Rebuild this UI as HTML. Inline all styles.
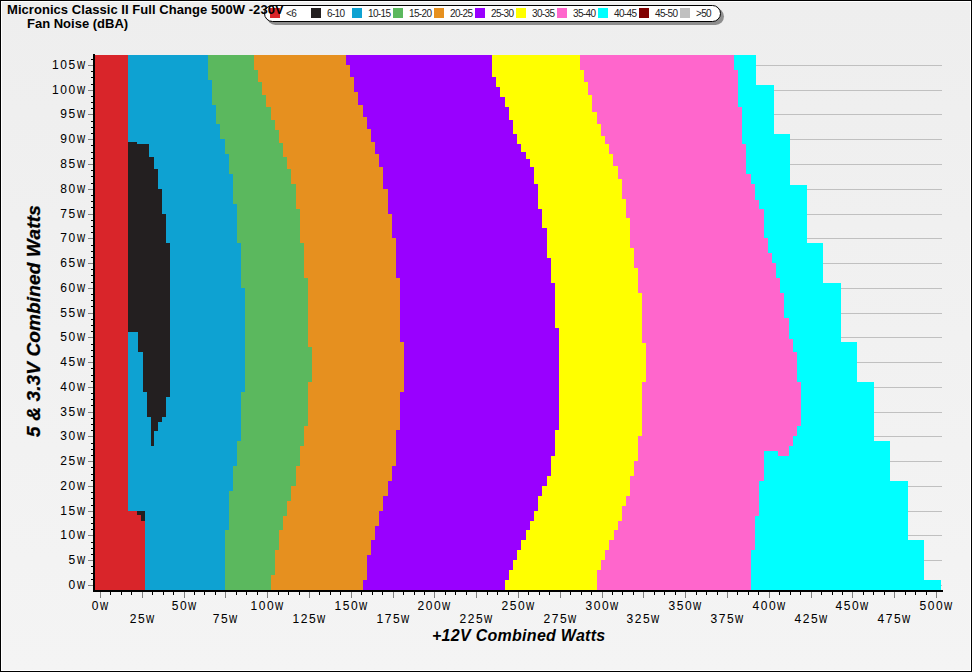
<!DOCTYPE html><html><head><meta charset="utf-8"><style>
html,body{margin:0;padding:0}
body{width:972px;height:672px;position:relative;overflow:hidden;font-family:"Liberation Sans",sans-serif;
background:linear-gradient(to bottom,#eeeeee 0%,#f1f1f1 50%,#f4f4f4 100%)}
.frame{position:absolute;left:0;top:0;width:970px;height:670px;border:1px solid #000}
.frame2{position:absolute;left:1px;top:1px;width:968px;height:668px;border:1px solid #fff}
.t{position:absolute;white-space:nowrap;line-height:1}
.yl{position:absolute;right:887px;font-size:12px;letter-spacing:1.6px;white-space:nowrap;color:#000;line-height:12px;-webkit-text-stroke:0.05px #000}
.w{display:inline-block;font-size:14.5px;transform:scaleX(0.78);transform-origin:0 0;margin-right:-2.3px;letter-spacing:0}
.xl{position:absolute;font-size:12px;letter-spacing:1.6px;white-space:nowrap;color:#000;line-height:12px;text-align:center;width:60px;-webkit-text-stroke:0.05px #000}
.leg{position:absolute;left:264px;top:5px;width:455px;height:15px;border:1px solid #000;border-radius:9px;background:#fff}
.legsh{position:absolute;left:267px;top:8px;width:457px;height:17px;border-radius:9px;background:#8e8e8e}
.sq{position:absolute;top:8px;width:10px;height:10px}
.lt{position:absolute;top:9px;font-size:10px;letter-spacing:-0.65px;line-height:9px;white-space:nowrap;color:#222}

</style></head><body>
<div class="frame"></div><div class="frame2"></div>
<svg width="972" height="672" style="position:absolute;left:0;top:0" shape-rendering="crispEdges"><rect x="95" y="65" width="847" height="1" fill="#c0c0c0"/><rect x="95" y="90" width="847" height="1" fill="#c0c0c0"/><rect x="95" y="114" width="847" height="1" fill="#c0c0c0"/><rect x="95" y="139" width="847" height="1" fill="#c0c0c0"/><rect x="95" y="164" width="847" height="1" fill="#c0c0c0"/><rect x="95" y="189" width="847" height="1" fill="#c0c0c0"/><rect x="95" y="214" width="847" height="1" fill="#c0c0c0"/><rect x="95" y="238" width="847" height="1" fill="#c0c0c0"/><rect x="95" y="263" width="847" height="1" fill="#c0c0c0"/><rect x="95" y="288" width="847" height="1" fill="#c0c0c0"/><rect x="95" y="313" width="847" height="1" fill="#c0c0c0"/><rect x="95" y="337" width="847" height="1" fill="#c0c0c0"/><rect x="95" y="362" width="847" height="1" fill="#c0c0c0"/><rect x="95" y="387" width="847" height="1" fill="#c0c0c0"/><rect x="95" y="412" width="847" height="1" fill="#c0c0c0"/><rect x="95" y="436" width="847" height="1" fill="#c0c0c0"/><rect x="95" y="461" width="847" height="1" fill="#c0c0c0"/><rect x="95" y="486" width="847" height="1" fill="#c0c0c0"/><rect x="95" y="511" width="847" height="1" fill="#c0c0c0"/><rect x="95" y="535" width="847" height="1" fill="#c0c0c0"/><rect x="95" y="560" width="847" height="1" fill="#c0c0c0"/><rect x="95" y="585" width="847" height="1" fill="#c0c0c0"/><path d="M95 55 L756 55 L756 85 L774 85 L774 134 L790 134 L790 185 L807 185 L807 243 L823 243 L823 283 L841 283 L841 342 L857 342 L857 382 L874 382 L874 441 L890 441 L890 481 L908 481 L908 540 L924 540 L924 580 L941 580 L941 590 L95 590 Z" fill="#00ffff"/><path d="M95 55 L734 55 L734 70 L738 70 L738 107 L742 107 L742 144 L746 144 L746 174 L751 174 L751 184 L755 184 L755 200 L759 200 L759 209 L764 209 L764 238 L768 238 L768 253 L772 253 L772 263 L776 263 L776 278 L780 278 L780 293 L784 293 L784 318 L789 318 L789 339 L793 339 L793 352 L797 352 L797 382 L801 382 L801 426 L797 426 L797 436 L793 436 L793 446 L789 446 L789 456 L764 456 L764 481 L759 481 L759 516 L755 516 L755 550 L751 550 L751 590 L95 590 Z" fill="#ff66cc"/><path d="M95 55 L580 55 L580 70 L584 70 L584 82 L588 82 L588 95 L592 95 L592 112 L597 112 L597 124 L601 124 L601 136 L605 136 L605 144 L609 144 L609 154 L613 154 L613 166 L618 166 L618 179 L622 179 L622 199 L626 199 L626 218 L630 218 L630 248 L634 248 L634 268 L638 268 L638 293 L642 293 L642 343 L646 343 L646 382 L642 382 L642 436 L638 436 L638 461 L634 461 L634 476 L630 476 L630 496 L626 496 L626 506 L622 506 L622 521 L618 521 L618 530 L614 530 L614 540 L609 540 L609 550 L605 550 L605 560 L601 560 L601 570 L597 570 L597 590 L95 590 Z" fill="#ffff00"/><path d="M95 55 L492 55 L492 77 L496 77 L496 87 L500 87 L500 97 L505 97 L505 107 L509 107 L509 120 L513 120 L513 134 L517 134 L517 144 L521 144 L521 152 L526 152 L526 159 L530 159 L530 167 L534 167 L534 184 L538 184 L538 209 L542 209 L542 228 L547 228 L547 258 L551 258 L551 283 L555 283 L555 328 L559 328 L559 430 L555 430 L555 456 L551 456 L551 476 L547 476 L547 486 L542 486 L542 496 L538 496 L538 511 L534 511 L534 521 L530 521 L530 530 L526 530 L526 540 L521 540 L521 550 L517 550 L517 560 L513 560 L513 570 L509 570 L509 580 L505 580 L505 590 L95 590 Z" fill="#9900ff"/><path d="M95 55 L346 55 L346 65 L350 65 L350 77 L354 77 L354 92 L358 92 L358 105 L363 105 L363 117 L367 117 L367 129 L371 129 L371 142 L375 142 L375 154 L379 154 L379 167 L383 167 L383 189 L388 189 L388 214 L392 214 L392 238 L396 238 L396 278 L400 278 L400 342 L404 342 L404 392 L400 392 L400 430 L396 430 L396 466 L392 466 L392 481 L388 481 L388 496 L383 496 L383 511 L379 511 L379 526 L375 526 L375 540 L371 540 L371 555 L367 555 L367 580 L363 580 L363 590 L95 590 Z" fill="#e6901f"/><path d="M95 55 L254 55 L254 70 L258 70 L258 82 L262 82 L262 95 L266 95 L266 107 L271 107 L271 120 L275 120 L275 130 L279 130 L279 143 L283 143 L283 157 L287 157 L287 169 L291 169 L291 184 L296 184 L296 209 L300 209 L300 243 L304 243 L304 278 L308 278 L308 347 L312 347 L312 382 L308 382 L308 426 L304 426 L304 446 L300 446 L300 466 L296 466 L296 486 L291 486 L291 501 L287 501 L287 516 L283 516 L283 530 L279 530 L279 550 L275 550 L275 575 L271 575 L271 590 L95 590 Z" fill="#5bb85e"/><path d="M95 55 L208 55 L208 80 L212 80 L212 105 L216 105 L216 124 L220 124 L220 139 L225 139 L225 154 L229 154 L229 174 L233 174 L233 204 L237 204 L237 243 L241 243 L241 288 L245 288 L245 392 L241 392 L241 441 L237 441 L237 466 L233 466 L233 491 L229 491 L229 530 L225 530 L225 590 L95 590 Z" fill="#0ea2d2"/><path d="M95 55 L128 55 L128 511 L145 511 L145 590 L95 590 Z" fill="#d9252a"/><rect x="764" y="451" width="14" height="5" fill="#00ffff"/><path d="M137 142 L137 144 L149 144 L149 157 L154 157 L154 169 L158 169 L158 189 L162 189 L162 214 L166 214 L166 243 L170 243 L170 397 L166 397 L166 417 L162 417 L162 422 L158 422 L158 431 L154 431 L154 446 L151 446 L151 417 L147 417 L147 392 L143 392 L143 352 L138 352 L138 332 L128 332 L128 142 Z" fill="#231f20"/><rect x="137" y="511" width="8" height="4" fill="#231f20"/><rect x="141" y="515" width="4" height="6" fill="#231f20"/><rect x="93" y="54" width="2" height="538" fill="#000"/><rect x="93" y="590" width="850" height="2" fill="#000"/><rect x="88" y="65" width="5" height="1" fill="#808080"/><rect x="88" y="90" width="5" height="1" fill="#808080"/><rect x="88" y="114" width="5" height="1" fill="#808080"/><rect x="88" y="139" width="5" height="1" fill="#808080"/><rect x="88" y="164" width="5" height="1" fill="#808080"/><rect x="88" y="189" width="5" height="1" fill="#808080"/><rect x="88" y="214" width="5" height="1" fill="#808080"/><rect x="88" y="238" width="5" height="1" fill="#808080"/><rect x="88" y="263" width="5" height="1" fill="#808080"/><rect x="88" y="288" width="5" height="1" fill="#808080"/><rect x="88" y="313" width="5" height="1" fill="#808080"/><rect x="88" y="337" width="5" height="1" fill="#808080"/><rect x="88" y="362" width="5" height="1" fill="#808080"/><rect x="88" y="387" width="5" height="1" fill="#808080"/><rect x="88" y="412" width="5" height="1" fill="#808080"/><rect x="88" y="436" width="5" height="1" fill="#808080"/><rect x="88" y="461" width="5" height="1" fill="#808080"/><rect x="88" y="486" width="5" height="1" fill="#808080"/><rect x="88" y="511" width="5" height="1" fill="#808080"/><rect x="88" y="535" width="5" height="1" fill="#808080"/><rect x="88" y="560" width="5" height="1" fill="#808080"/><rect x="88" y="585" width="5" height="1" fill="#808080"/><rect x="91" y="59" width="2" height="1" fill="#000"/><rect x="91" y="71" width="2" height="1" fill="#000"/><rect x="91" y="77" width="2" height="1" fill="#000"/><rect x="91" y="84" width="2" height="1" fill="#000"/><rect x="91" y="96" width="2" height="1" fill="#000"/><rect x="91" y="102" width="2" height="1" fill="#000"/><rect x="91" y="108" width="2" height="1" fill="#000"/><rect x="91" y="121" width="2" height="1" fill="#000"/><rect x="91" y="127" width="2" height="1" fill="#000"/><rect x="91" y="133" width="2" height="1" fill="#000"/><rect x="91" y="145" width="2" height="1" fill="#000"/><rect x="91" y="152" width="2" height="1" fill="#000"/><rect x="91" y="158" width="2" height="1" fill="#000"/><rect x="91" y="170" width="2" height="1" fill="#000"/><rect x="91" y="176" width="2" height="1" fill="#000"/><rect x="91" y="183" width="2" height="1" fill="#000"/><rect x="91" y="195" width="2" height="1" fill="#000"/><rect x="91" y="201" width="2" height="1" fill="#000"/><rect x="91" y="207" width="2" height="1" fill="#000"/><rect x="91" y="220" width="2" height="1" fill="#000"/><rect x="91" y="226" width="2" height="1" fill="#000"/><rect x="91" y="232" width="2" height="1" fill="#000"/><rect x="91" y="245" width="2" height="1" fill="#000"/><rect x="91" y="251" width="2" height="1" fill="#000"/><rect x="91" y="257" width="2" height="1" fill="#000"/><rect x="91" y="269" width="2" height="1" fill="#000"/><rect x="91" y="275" width="2" height="1" fill="#000"/><rect x="91" y="282" width="2" height="1" fill="#000"/><rect x="91" y="294" width="2" height="1" fill="#000"/><rect x="91" y="300" width="2" height="1" fill="#000"/><rect x="91" y="306" width="2" height="1" fill="#000"/><rect x="91" y="319" width="2" height="1" fill="#000"/><rect x="91" y="325" width="2" height="1" fill="#000"/><rect x="91" y="331" width="2" height="1" fill="#000"/><rect x="91" y="344" width="2" height="1" fill="#000"/><rect x="91" y="350" width="2" height="1" fill="#000"/><rect x="91" y="356" width="2" height="1" fill="#000"/><rect x="91" y="368" width="2" height="1" fill="#000"/><rect x="91" y="375" width="2" height="1" fill="#000"/><rect x="91" y="381" width="2" height="1" fill="#000"/><rect x="91" y="393" width="2" height="1" fill="#000"/><rect x="91" y="399" width="2" height="1" fill="#000"/><rect x="91" y="405" width="2" height="1" fill="#000"/><rect x="91" y="418" width="2" height="1" fill="#000"/><rect x="91" y="424" width="2" height="1" fill="#000"/><rect x="91" y="430" width="2" height="1" fill="#000"/><rect x="91" y="443" width="2" height="1" fill="#000"/><rect x="91" y="449" width="2" height="1" fill="#000"/><rect x="91" y="455" width="2" height="1" fill="#000"/><rect x="91" y="467" width="2" height="1" fill="#000"/><rect x="91" y="474" width="2" height="1" fill="#000"/><rect x="91" y="480" width="2" height="1" fill="#000"/><rect x="91" y="492" width="2" height="1" fill="#000"/><rect x="91" y="498" width="2" height="1" fill="#000"/><rect x="91" y="505" width="2" height="1" fill="#000"/><rect x="91" y="517" width="2" height="1" fill="#000"/><rect x="91" y="523" width="2" height="1" fill="#000"/><rect x="91" y="529" width="2" height="1" fill="#000"/><rect x="91" y="542" width="2" height="1" fill="#000"/><rect x="91" y="548" width="2" height="1" fill="#000"/><rect x="91" y="554" width="2" height="1" fill="#000"/><rect x="91" y="566" width="2" height="1" fill="#000"/><rect x="91" y="573" width="2" height="1" fill="#000"/><rect x="91" y="579" width="2" height="1" fill="#000"/><rect x="100" y="592" width="1" height="6" fill="#808080"/><rect x="142" y="592" width="1" height="6" fill="#808080"/><rect x="184" y="592" width="1" height="6" fill="#808080"/><rect x="225" y="592" width="1" height="6" fill="#808080"/><rect x="267" y="592" width="1" height="6" fill="#808080"/><rect x="309" y="592" width="1" height="6" fill="#808080"/><rect x="351" y="592" width="1" height="6" fill="#808080"/><rect x="393" y="592" width="1" height="6" fill="#808080"/><rect x="434" y="592" width="1" height="6" fill="#808080"/><rect x="476" y="592" width="1" height="6" fill="#808080"/><rect x="518" y="592" width="1" height="6" fill="#808080"/><rect x="560" y="592" width="1" height="6" fill="#808080"/><rect x="602" y="592" width="1" height="6" fill="#808080"/><rect x="643" y="592" width="1" height="6" fill="#808080"/><rect x="685" y="592" width="1" height="6" fill="#808080"/><rect x="727" y="592" width="1" height="6" fill="#808080"/><rect x="769" y="592" width="1" height="6" fill="#808080"/><rect x="811" y="592" width="1" height="6" fill="#808080"/><rect x="852" y="592" width="1" height="6" fill="#808080"/><rect x="894" y="592" width="1" height="6" fill="#808080"/><rect x="936" y="592" width="1" height="6" fill="#808080"/><rect x="110" y="592" width="1" height="3" fill="#000"/><rect x="121" y="592" width="1" height="3" fill="#000"/><rect x="131" y="592" width="1" height="3" fill="#000"/><rect x="152" y="592" width="1" height="3" fill="#000"/><rect x="163" y="592" width="1" height="3" fill="#000"/><rect x="173" y="592" width="1" height="3" fill="#000"/><rect x="194" y="592" width="1" height="3" fill="#000"/><rect x="204" y="592" width="1" height="3" fill="#000"/><rect x="215" y="592" width="1" height="3" fill="#000"/><rect x="236" y="592" width="1" height="3" fill="#000"/><rect x="246" y="592" width="1" height="3" fill="#000"/><rect x="257" y="592" width="1" height="3" fill="#000"/><rect x="278" y="592" width="1" height="3" fill="#000"/><rect x="288" y="592" width="1" height="3" fill="#000"/><rect x="299" y="592" width="1" height="3" fill="#000"/><rect x="319" y="592" width="1" height="3" fill="#000"/><rect x="330" y="592" width="1" height="3" fill="#000"/><rect x="340" y="592" width="1" height="3" fill="#000"/><rect x="361" y="592" width="1" height="3" fill="#000"/><rect x="372" y="592" width="1" height="3" fill="#000"/><rect x="382" y="592" width="1" height="3" fill="#000"/><rect x="403" y="592" width="1" height="3" fill="#000"/><rect x="414" y="592" width="1" height="3" fill="#000"/><rect x="424" y="592" width="1" height="3" fill="#000"/><rect x="445" y="592" width="1" height="3" fill="#000"/><rect x="455" y="592" width="1" height="3" fill="#000"/><rect x="466" y="592" width="1" height="3" fill="#000"/><rect x="487" y="592" width="1" height="3" fill="#000"/><rect x="497" y="592" width="1" height="3" fill="#000"/><rect x="508" y="592" width="1" height="3" fill="#000"/><rect x="528" y="592" width="1" height="3" fill="#000"/><rect x="539" y="592" width="1" height="3" fill="#000"/><rect x="549" y="592" width="1" height="3" fill="#000"/><rect x="570" y="592" width="1" height="3" fill="#000"/><rect x="581" y="592" width="1" height="3" fill="#000"/><rect x="591" y="592" width="1" height="3" fill="#000"/><rect x="612" y="592" width="1" height="3" fill="#000"/><rect x="622" y="592" width="1" height="3" fill="#000"/><rect x="633" y="592" width="1" height="3" fill="#000"/><rect x="654" y="592" width="1" height="3" fill="#000"/><rect x="664" y="592" width="1" height="3" fill="#000"/><rect x="675" y="592" width="1" height="3" fill="#000"/><rect x="696" y="592" width="1" height="3" fill="#000"/><rect x="706" y="592" width="1" height="3" fill="#000"/><rect x="717" y="592" width="1" height="3" fill="#000"/><rect x="737" y="592" width="1" height="3" fill="#000"/><rect x="748" y="592" width="1" height="3" fill="#000"/><rect x="758" y="592" width="1" height="3" fill="#000"/><rect x="779" y="592" width="1" height="3" fill="#000"/><rect x="790" y="592" width="1" height="3" fill="#000"/><rect x="800" y="592" width="1" height="3" fill="#000"/><rect x="821" y="592" width="1" height="3" fill="#000"/><rect x="832" y="592" width="1" height="3" fill="#000"/><rect x="842" y="592" width="1" height="3" fill="#000"/><rect x="863" y="592" width="1" height="3" fill="#000"/><rect x="873" y="592" width="1" height="3" fill="#000"/><rect x="884" y="592" width="1" height="3" fill="#000"/><rect x="905" y="592" width="1" height="3" fill="#000"/><rect x="915" y="592" width="1" height="3" fill="#000"/><rect x="926" y="592" width="1" height="3" fill="#000"/></svg>
<div class="legsh"></div><div class="leg"></div>
<div class="sq" style="left:270px;background:#d9252a"></div>
<div class="lt" style="left:286px">&lt;6</div>
<div class="sq" style="left:311px;background:#231f20"></div>
<div class="lt" style="left:327px">6-10</div>
<div class="sq" style="left:352px;background:#0ea2d2"></div>
<div class="lt" style="left:368px">10-15</div>
<div class="sq" style="left:393px;background:#5bb85e"></div>
<div class="lt" style="left:409px">15-20</div>
<div class="sq" style="left:434px;background:#e6901f"></div>
<div class="lt" style="left:450px">20-25</div>
<div class="sq" style="left:475px;background:#9900ff"></div>
<div class="lt" style="left:491px">25-30</div>
<div class="sq" style="left:516px;background:#ffff00"></div>
<div class="lt" style="left:532px">30-35</div>
<div class="sq" style="left:557px;background:#ff66cc"></div>
<div class="lt" style="left:573px">35-40</div>
<div class="sq" style="left:598px;background:#00ffff"></div>
<div class="lt" style="left:614px">40-45</div>
<div class="sq" style="left:639px;background:#800000"></div>
<div class="lt" style="left:655px">45-50</div>
<div class="sq" style="left:680px;background:#c0c0c0"></div>
<div class="lt" style="left:696px">&gt;50</div>
<div class="t" style="left:7px;top:3px;font-size:13px;font-weight:bold;letter-spacing:0.05px">Micronics Classic II Full Change 500W -230V</div>
<div class="t" style="left:27px;top:17px;font-size:13px;font-weight:bold">Fan Noise (dBA)</div>
<div class="yl" style="top:58px">105<span class="w">w</span></div>
<div class="yl" style="top:83px">100<span class="w">w</span></div>
<div class="yl" style="top:107px">95<span class="w">w</span></div>
<div class="yl" style="top:132px">90<span class="w">w</span></div>
<div class="yl" style="top:157px">85<span class="w">w</span></div>
<div class="yl" style="top:182px">80<span class="w">w</span></div>
<div class="yl" style="top:207px">75<span class="w">w</span></div>
<div class="yl" style="top:231px">70<span class="w">w</span></div>
<div class="yl" style="top:256px">65<span class="w">w</span></div>
<div class="yl" style="top:281px">60<span class="w">w</span></div>
<div class="yl" style="top:306px">55<span class="w">w</span></div>
<div class="yl" style="top:330px">50<span class="w">w</span></div>
<div class="yl" style="top:355px">45<span class="w">w</span></div>
<div class="yl" style="top:380px">40<span class="w">w</span></div>
<div class="yl" style="top:405px">35<span class="w">w</span></div>
<div class="yl" style="top:429px">30<span class="w">w</span></div>
<div class="yl" style="top:454px">25<span class="w">w</span></div>
<div class="yl" style="top:479px">20<span class="w">w</span></div>
<div class="yl" style="top:504px">15<span class="w">w</span></div>
<div class="yl" style="top:528px">10<span class="w">w</span></div>
<div class="yl" style="top:553px">5<span class="w">w</span></div>
<div class="yl" style="top:578px">0<span class="w">w</span></div>
<div class="xl" style="left:70px;top:599px">0<span class="w">w</span></div>
<div class="xl" style="left:112px;top:612px">25<span class="w">w</span></div>
<div class="xl" style="left:154px;top:599px">50<span class="w">w</span></div>
<div class="xl" style="left:195px;top:612px">75<span class="w">w</span></div>
<div class="xl" style="left:237px;top:599px">100<span class="w">w</span></div>
<div class="xl" style="left:279px;top:612px">125<span class="w">w</span></div>
<div class="xl" style="left:321px;top:599px">150<span class="w">w</span></div>
<div class="xl" style="left:363px;top:612px">175<span class="w">w</span></div>
<div class="xl" style="left:404px;top:599px">200<span class="w">w</span></div>
<div class="xl" style="left:446px;top:612px">225<span class="w">w</span></div>
<div class="xl" style="left:488px;top:599px">250<span class="w">w</span></div>
<div class="xl" style="left:530px;top:612px">275<span class="w">w</span></div>
<div class="xl" style="left:572px;top:599px">300<span class="w">w</span></div>
<div class="xl" style="left:613px;top:612px">325<span class="w">w</span></div>
<div class="xl" style="left:655px;top:599px">350<span class="w">w</span></div>
<div class="xl" style="left:697px;top:612px">375<span class="w">w</span></div>
<div class="xl" style="left:739px;top:599px">400<span class="w">w</span></div>
<div class="xl" style="left:781px;top:612px">425<span class="w">w</span></div>
<div class="xl" style="left:822px;top:599px">450<span class="w">w</span></div>
<div class="xl" style="left:864px;top:612px">475<span class="w">w</span></div>
<div class="xl" style="left:906px;top:599px">500<span class="w">w</span></div>
<div class="t" style="left:432px;top:628px;font-size:16px;font-weight:bold;font-style:italic;letter-spacing:0.28px">+12V Combined Watts</div>
<div class="t" style="left:33px;top:321px;font-size:19px;font-weight:bold;font-style:italic;letter-spacing:0.13px;-webkit-text-stroke:0.3px #000;transform:translate(-50%,-50%) rotate(-90deg);transform-origin:center">5 &amp; 3.3V Combined Watts</div>
</body></html>
